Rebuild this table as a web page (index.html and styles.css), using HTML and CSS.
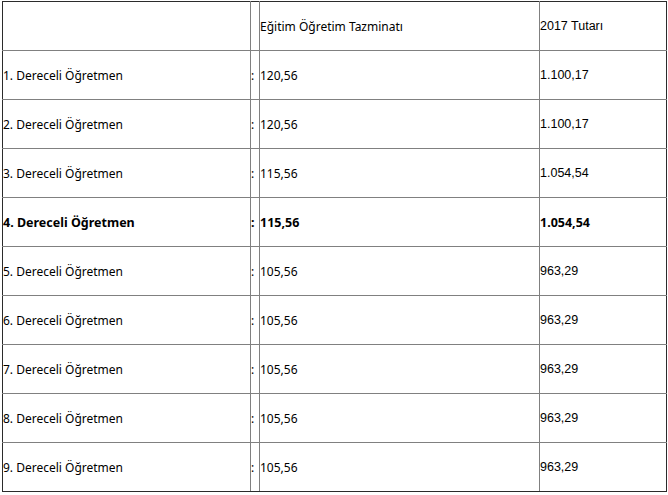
FILE: index.html
```html
<!DOCTYPE html>
<html lang="tr">
<head>
<meta charset="utf-8">
<link rel="stylesheet" href="styles.css">
</head>
<body>
<div class="wrap">
<table class="grid">
<colgroup>
<col class="c-name"><col class="c-sep"><col class="c-val"><col class="c-amt">
</colgroup>
<tbody>
<tr><td></td><td></td><td>Eğitim Öğretim Tazminatı</td><td class="amt">2017 Tutarı</td></tr>
<tr><td>1. Dereceli Öğretmen</td><td>:</td><td>120,56</td><td class="amt">1.100,17</td></tr>
<tr><td>2. Dereceli Öğretmen</td><td>:</td><td>120,56</td><td class="amt">1.100,17</td></tr>
<tr><td>3. Dereceli Öğretmen</td><td>:</td><td>115,56</td><td class="amt">1.054,54</td></tr>
<tr class="bold"><td>4. Dereceli Öğretmen</td><td>:</td><td>115,56</td><td>1.054,54</td></tr>
<tr><td>5. Dereceli Öğretmen</td><td>:</td><td>105,56</td><td class="amt">963,29</td></tr>
<tr><td>6. Dereceli Öğretmen</td><td>:</td><td>105,56</td><td class="amt">963,29</td></tr>
<tr><td>7. Dereceli Öğretmen</td><td>:</td><td>105,56</td><td class="amt">963,29</td></tr>
<tr><td>8. Dereceli Öğretmen</td><td>:</td><td>105,56</td><td class="amt">963,29</td></tr>
<tr><td>9. Dereceli Öğretmen</td><td>:</td><td>105,56</td><td class="amt">963,29</td></tr>
</tbody>
</table>
</div>
</body>
</html>
```
FILE: styles.css
```css
html, body { margin: 0; padding: 0; background: #fff; }
.wrap { padding: 1px 0 0 2px; }
.grid {
  border-collapse: collapse;
  table-layout: fixed;
  width: 664px;
  font-family: "Noto Sans", "Open Sans", sans-serif;
  font-size: 12px;
  color: #000;
}
.c-name { width: 248px; }
.c-sep { width: 9px; }
.c-val { width: 280px; }
.c-amt { width: 127px; }
.grid td {
  border: 1px solid #808080;
  height: 48px;
  padding: 0;
  vertical-align: middle;
  white-space: nowrap;
  overflow: hidden;
}
.grid td:first-child { border-left-color: #2b2b2b; }
.grid td:last-child { border-right-color: #2b2b2b; }
.grid tr:first-child td { border-top-color: #2b2b2b; }
.grid tr:last-child td { border-bottom-color: #2b2b2b; }
.grid td.amt { font-family: "Liberation Sans", Arial, sans-serif; font-size: 12.5px; }
.bold td { font-weight: bold; font-size: 12.5px; }
```
